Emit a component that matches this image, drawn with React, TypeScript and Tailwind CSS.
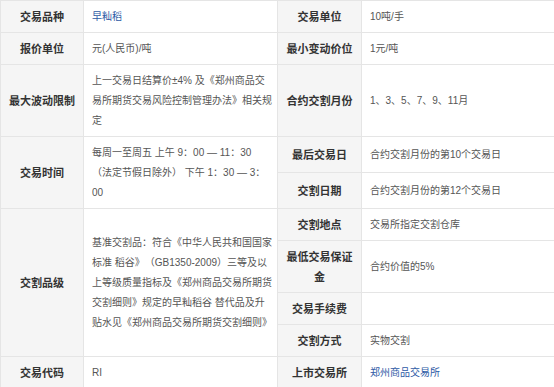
import React from 'react';

type Cell = { label: string; value?: React.ReactNode; rowSpan?: number };

const link = (text: string) => <a className="text-[#2d5aa5]">{text}</a>;

// each row: left pair (or null when covered by a rowSpan), right pair
const rows: { left: Cell | null; right: Cell }[] = [
  { left: { label: '交易品种', value: link('早籼稻') }, right: { label: '交易单位', value: '10吨/手' } },
  { left: { label: '报价单位', value: '元(人民币)/吨' }, right: { label: '最小变动价位', value: '1元/吨' } },
  {
    left: {
      label: '最大波动限制',
      value: '上一交易日结算价±4% 及《郑州商品交易所期货交易风险控制管理办法》相关规定',
    },
    right: { label: '合约交割月份', value: '1、3、5、7、9、11月' },
  },
  {
    left: {
      label: '交易时间',
      value: '每周一至周五 上午 9：00 — 11：30 （法定节假日除外） 下午 1：30 — 3：00',
      rowSpan: 2,
    },
    right: { label: '最后交易日', value: '合约交割月份的第10个交易日' },
  },
  { left: null, right: { label: '交割日期', value: '合约交割月份的第12个交易日' } },
  {
    left: {
      label: '交割品级',
      value:
        '基准交割品：符合《中华人民共和国国家标准 稻谷》（GB1350-2009）三等及以上等级质量指标及《郑州商品交易所期货交割细则》规定的早籼稻谷 替代品及升贴水见《郑州商品交易所期货交割细则》',
      rowSpan: 4,
    },
    right: { label: '交割地点', value: '交易所指定交割仓库' },
  },
  { left: null, right: { label: '最低交易保证金', value: '合约价值的5%' } },
  { left: null, right: { label: '交易手续费', value: '' } },
  { left: null, right: { label: '交割方式', value: '实物交割' } },
  { left: { label: '交易代码', value: 'RI' }, right: { label: '上市交易所', value: link('郑州商品交易所') } },
];

const labelCls =
  'border border-[#e5e5e5] bg-[#f5f5f5] px-[5px] pt-[6px] pb-[5px] text-center align-middle text-[11px] font-bold leading-[20px] text-[#333]';
const valueCls =
  'border border-[#e5e5e5] bg-white pl-[8px] pr-[4px] pt-[6px] pb-[5px] text-left align-middle text-[10px] leading-[20px] text-[#555]';

export default function App() {
  return (
    <div className="h-[387px] w-[554px] overflow-hidden bg-white font-['Liberation_Sans','Noto_Sans_CJK_SC',sans-serif] [text-spacing-trim:space-all]">
      <table className="w-[556px] table-fixed border-collapse">
        <colgroup>
          <col className="w-[83px]" />
          <col className="w-[194px]" />
          <col className="w-[84px]" />
          <col className="w-[195px]" />
        </colgroup>
        <tbody>
          {rows.map((row, i) => (
            <tr key={i}>
              {row.left && (
                <>
                  <th className={labelCls} rowSpan={row.left.rowSpan}>
                    {row.left.label}
                  </th>
                  <td className={valueCls} rowSpan={row.left.rowSpan}>
                    {row.left.value}
                  </td>
                </>
              )}
              <th className={labelCls}>{row.right.label}</th>
              <td className={valueCls}>{row.right.value}</td>
            </tr>
          ))}
        </tbody>
      </table>
    </div>
  );
}
